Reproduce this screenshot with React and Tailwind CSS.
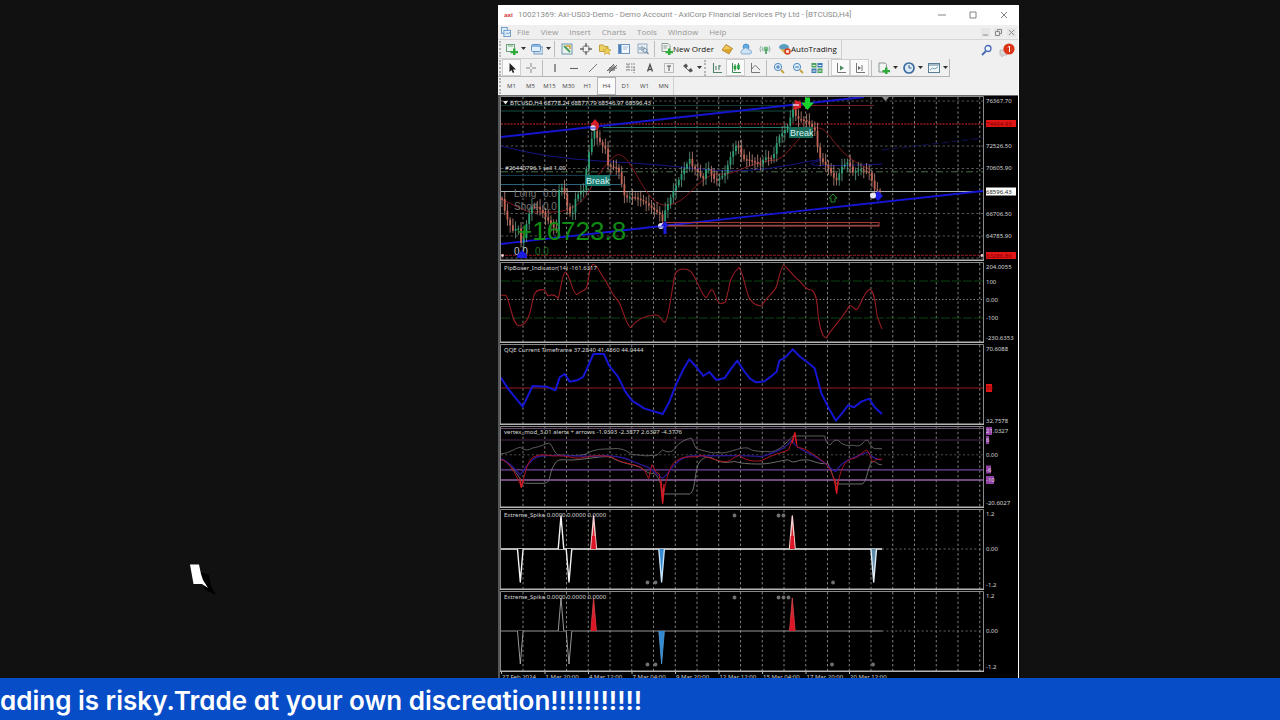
import React from "react";

const GRID_X = Array.from({ length: 22 }, (_, i) => 523 + i * 21.75);
const PLOT_LEFT = 501;
const PLOT_RIGHT = 983;

/* ---------- shared chart pieces ---------- */

function Label({ x = 986, y, fill = "#d4d4d4", children }) {
  return (
    <text x={x} y={y} fill={fill} className="font-['Noto_Sans',sans-serif] text-[6px]">
      {children}
    </text>
  );
}

function Panel({ top, bottom, label, viewBottom = bottom, children }) {
  return (
    <svg
      viewBox={`498 ${top} 520 ${viewBottom - top}`}
      className="block w-full"
      role="img"
      aria-label={label}
    >
      <rect x="498" y={top} width="520" height={viewBottom - top} fill="#000" />
      <g stroke="#8c9089" strokeWidth="0.9" strokeDasharray="2.4 2.4">
        {GRID_X.map((x) => (
          <line key={x} x1={x} x2={x} y1={top + 2} y2={bottom - 1} />
        ))}
      </g>
      {children}
      <rect x="498" y={top} width="2" height={viewBottom - top} fill="#55575a" />
      <path
        d={`M500.5 ${bottom - 1}V${top + 1.5}H983.5V${bottom - 1}`}
        fill="none"
        stroke="#8a8a8a"
      />
      <line x1="500" x2="984" y1={bottom - 0.7} y2={bottom - 0.7} stroke="#b4b4b4" strokeWidth="1.4" />
    </svg>
  );
}

function HLine({ y, stroke, dash, width = 0.9, x1 = PLOT_LEFT, x2 = PLOT_RIGHT }) {
  return <line x1={x1} x2={x2} y1={y} y2={y} stroke={stroke} strokeWidth={width} strokeDasharray={dash} />;
}

/* ---------- price panel ---------- */

const PRICE = [
  [502, 199], [506, 215], [513, 228], [518, 224], [522, 246], [526, 225], [531, 208], [538, 210],
  [545, 219], [551, 225], [557, 230], [559, 188], [563, 184], [568, 207], [572, 214], [576, 195],
  [585, 191], [587, 161], [591, 149], [593, 130], [598, 142], [606, 149], [608, 164], [618, 165],
  [622, 183], [625, 196], [631, 197], [641, 203], [651, 209], [660, 213], [663, 220], [665, 208],
  [673, 189], [681, 175], [690, 161], [692, 169], [698, 175], [703, 181], [707, 166], [715, 178],
  [725, 171], [730, 157], [737, 145], [743, 162], [760, 164], [765, 155], [773, 155], [778, 136],
  [787, 129], [793, 112], [797, 122], [807, 122], [815, 129], [819, 154], [828, 165], [836, 182],
  [842, 169], [848, 165], [853, 175], [860, 169], [870, 170], [874, 186], [882, 190],
];

function priceAt(x) {
  for (let i = 1; i < PRICE.length; i++) {
    const [x0, y0] = PRICE[i - 1];
    const [x1, y1] = PRICE[i];
    if (x <= x1) return y0 + ((y1 - y0) * (x - x0)) / (x1 - x0);
  }
  return 190;
}

const CANDLES = Array.from({ length: 140 }, (_, i) => {
  const x = 502 + i * 2.72;
  const wiggle = (n) => Math.sin(n * 12.9) * 3;
  const open = priceAt(Math.max(502, x - 2.72)) + wiggle(i - 1);
  const close = priceAt(x) + wiggle(i);
  const hi = Math.min(open, close) - 2 - Math.abs(Math.sin(i * 7.3)) * 6;
  const lo = Math.max(open, close) + 2 + Math.abs(Math.cos(i * 5.1)) * 6;
  return { x, open, close, hi, lo };
});

function PricePanel() {
  return (
    <Panel top={95} bottom={261} label="BTCUSD price, four hour candles">
      <rect x="498" y="95" width="520" height="1" fill="#6b6b6b" />
      {[101, 146, 168.5, 213.5, 236, 258].map((y) => (
        <HLine key={y} y={y} stroke="#5d615c" dash="2.4 2.4" />
      ))}
      <HLine y={105.5} stroke="#143f38" x2={793} />
      <HLine y={111} stroke="#195247" x2={793} />
      <HLine y={127.5} stroke="#247465" x1={603} x2={789} width={1.2} />
      <HLine y={131} stroke="#1b5c50" x1={603} x2={789} />
      <HLine y={105.5} stroke="#7b1d22" x1={800} x2={874} />
      <HLine y={124} stroke="#db2a30" dash="2 1.2" width={1.2} />
      <HLine y={171.8} stroke="#527b52" dash="7 3 2 3" />
      <HLine y={175.5} stroke="#173f54" x2={621} />
      <HLine y={184.5} stroke="#2c7189" x2={621} />
      <HLine y={191.5} stroke="#a9b3b7" width={1.1} />
      <HLine y={255.3} stroke="#a61d26" dash="3 1" />

      <g fill="none">
        <path d="M501 146Q545 158 600 161T700 169T790 165T815 162T882 164" stroke="#151585" />
        <path d="M882 150L983 138" stroke="#10105a" strokeDasharray="7 3" />
        <path
          d="M501 199C515 205 525 213 536 212S560 215 575 206S590 185 602 170S617 152 624 157S640 184 650 196S670 207 681 200S705 172 720 174S750 161 777 160C788 154 795 142 803 135S819 124 827 133S845 160 870 169"
          stroke="#8e1820"
          strokeWidth="0.9"
        />
        <path d="M501 137L864 97" stroke="#1515cf" strokeWidth="1.8" />
        <path d="M501 244L662 226L983 191" stroke="#1515d8" strokeWidth="1.8" />
        <rect x="663" y="222.5" width="216" height="3.6" stroke="#a2372f" strokeWidth="1.1" />
        <path d="M663 225.3H879" stroke="#b87479" strokeWidth="0.7" />
      </g>

      {CANDLES.map((c) => {
        const up = c.close < c.open;
        const color = up ? "#2fae7e" : "#d8705e";
        return (
          <g key={c.x} opacity="0.9">
            <line x1={c.x} x2={c.x} y1={c.hi} y2={c.lo} stroke={up ? "#6fb096" : "#d69c8e"} strokeWidth="0.8" />
            <rect
              x={c.x - 0.9}
              y={Math.min(c.open, c.close)}
              width="1.8"
              height={Math.max(1.5, Math.abs(c.close - c.open))}
              fill={color}
            />
          </g>
        );
      })}

      <g className="font-['Liberation_Sans',sans-serif]">
        <text x="517" y="240" fill="#108a12" className="text-[26px]">+16723.8</text>
        <g fill="#747474" className="text-[10px]">
          <text x="514" y="197">Long</text>
          <text x="543" y="197">0.0</text>
          <text x="514" y="210">Short</text>
          <text x="543" y="210">0.0</text>
          <text x="514" y="255" fill="#c4c4c4">0.0</text>
          <text x="535" y="255" fill="#1d701e">0.0</text>
        </g>
        <rect x="585" y="175" width="25" height="11" fill="#197a70" />
        <rect x="789" y="127" width="24" height="11" fill="#1a6a5a" />
        <g fill="#d9f2ef" className="text-[9px]">
          <text x="586" y="184">Break</text>
          <text x="790" y="136">Break</text>
        </g>
      </g>

      <circle cx="595" cy="126" r="4" fill="#d21d2a" />
      <path d="M595 119l4 5h-8z" fill="#d21d2a" />
      <circle cx="593" cy="128" r="2.8" fill="#dcdcf8" />
      <path d="M590 128h6" stroke="#2727d0" strokeWidth="1" />
      <path d="M795 100l6 2v6l-8 2z" fill="#d8222c" />
      <path d="M793 105h6" stroke="#e7d9f0" strokeWidth="1.4" />
      <path d="M805 97.500h5v5h4l-6.500 7.500l-6.500-7.500h4z" fill="#17d42b" />
      <path d="M833 194l4 4h-2v4h-4v-4h-2z" fill="none" stroke="#1d8a27" />
      <circle cx="661" cy="226" r="3" fill="#dcdcf8" />
      <path d="M665 221l4 5h-2.500v8h-3v-8H661z" fill="#1c1ce0" />
      <path d="M658 227h6" stroke="#2727d0" strokeWidth="1" />
      <path d="M872 195l6-4l5 5l-5 5z" fill="#1c1ce0" />
      <circle cx="873" cy="195.500" r="3" fill="#e6e6f4" />
      <path d="M522 250l5 5v3h-10v-3z" fill="#1c1ce0" />
      <path d="M882 97h7l-3.500 4z" fill="#8b8b8b" />
      <circle cx="502.500" cy="255.500" r="1.400" fill="#f0c8c8" />
      <circle cx="982" cy="255.500" r="1.400" fill="#f0c8c8" />

      <path d="M503 101h5l-2.500 3.500z" fill="#e6e6e6" />
      <Label x={510} y={105} fill="#e2e2e2">BTCUSD,H4  68778.24 68877.79 68546.97 68596.43</Label>
      <Label x={505} y={170} fill="#e2e2e2">#26440796.1 sell 1.00</Label>
      <Label y={103}>76367.70</Label>
      <rect x="986" y="120" width="30" height="7" fill="#e01515" />
      <Label y={126} fill="#7c0000">74464.93</Label>
      <Label y={148}>72526.50</Label>
      <Label y={170}>70605.90</Label>
      <rect x="986" y="187.500" width="30" height="8" fill="#fff" />
      <Label y={194} fill="#222">68596.43</Label>
      <Label y={216}>66706.50</Label>
      <Label y={238}>64785.90</Label>
      <rect x="986" y="252" width="30" height="7" fill="#e01515" />
      <Label y={258} fill="#7c0000">63286.80</Label>
    </Panel>
  );
}

/* ---------- oscillator panels ---------- */

function PipBoxerPanel() {
  return (
    <Panel top={261} bottom={343} label="PipBoxer indicator">
      <HLine y={281} stroke="#0c4a12" dash="9 2" />
      <HLine y={299.5} stroke="#8d918b" dash="1.500 2" />
      <HLine y={318} stroke="#0c4a12" dash="9 2" />
      <g transform="translate(498 260) scale(.3333)" fill="none" stroke="#9a1c24" strokeWidth="3.2" strokeLinejoin="round">
        <path d="M8 106H24C36 125 44 195 62 197C84 198 96 170 103 125C108 95 116 88 138 89C146 91 146 112 154 107S172 106 181 115C188 90 193 36 203 36C214 40 224 104 237 104C250 90 256 96 265 85C272 65 274 16 285 13C300 14 308 45 318 55C332 74 342 105 356 117C374 135 380 190 398 203C410 185 430 168 470 165C494 164 490 190 501 186C514 178 524 60 532 42C540 22 566 25 578 34C600 58 606 100 624 113C632 110 635 85 644 90C654 104 656 130 668 131C692 128 682 118 692 88C698 45 712 35 723 22C738 40 744 102 756 118C767 132 780 138 792 137" />
        <path d="M792 137C806 108 830 100 837 75C844 48 850 18 858 16C874 28 886 50 904 62C916 74 922 90 938 89C952 92 957 115 960 160C965 200 971 232 985 234C1001 205 1036 172 1054 137C1065 132 1072 162 1082 142C1094 118 1101 95 1115 88C1132 95 1133 144 1138 170L1152 207" />
      </g>
      <Label x={504} y={270} fill="#d8d8d8">PipBoxer_Indicator(14) -161.6317</Label>
      <Label y={269}>204.0055</Label>
      <Label y={284}>100</Label>
      <Label y={302}>0.00</Label>
      <Label y={320}>-100</Label>
      <Label y={340}>-230.6353</Label>
    </Panel>
  );
}

function QqePanel() {
  return (
    <Panel top={343} bottom={425} label="QQE current timeframe">
      <HLine y={388} stroke="#9a1c22" width={1.1} />
      <g transform="translate(498 260) scale(.3333)" fill="none" stroke="#1515d2" strokeWidth="6" strokeLinejoin="round">
        <path d="M8 352L30 386L74 440L104 378L146 380L172 391L185 352L200 342L215 365L240 360L256 350L272 315L286 282L318 282L334 318L360 350L382 395L402 422L440 446L494 462L512 430L536 370L555 330L574 298L592 318L616 348L634 336L655 360L680 354L700 325L718 302L736 330L756 356L774 367L800 364L818 350L836 335L844 302L862 292L884 268L908 292L932 310L950 325L970 400L990 440L1014 482L1032 460L1050 436L1068 442L1090 425L1114 416L1130 442L1152 462" />
      </g>
      <Label x={504} y={352} fill="#d8d8d8">QQE Current Timeframe 37.2840 41.4860 44.0444</Label>
      <Label y={351}>70.6088</Label>
      <rect x="986" y="384" width="6" height="8" fill="#e01515" />
      <Label y={390} fill="#7c0000">50</Label>
      <Label y={423}>32.7578</Label>
    </Panel>
  );
}

function VortexPanel() {
  return (
    <Panel top={425} bottom={508} label="Vertex alerts and arrows">
      <HLine y={428.5} stroke="#6b4a72" width={1.2} />
      <HLine y={440} stroke="#58285f" />
      <HLine y={454.8} stroke="#565956" dash="2 2.400" />
      <HLine y={469.8} stroke="#7644a0" width={1.2} />
      <HLine y={480} stroke="#9462ab" width={1.3} />
      <g transform="translate(498 424) scale(.3333)" fill="none" strokeWidth="2.600" strokeLinejoin="round">
        <path d="M8 90C40 86 50 72 68 70C80 80 90 80 104 72C130 68 146 56 155 58C168 72 168 90 184 93C220 95 250 96 264 90C280 80 300 74 336 75C372 70 386 80 401 92C430 92 440 98 460 94C480 100 484 84 494 78C515 90 530 80 536 66C552 50 570 44 580 42C592 60 588 75 602 76C632 84 640 88 660 86C690 92 720 68 750 72C770 86 792 80 820 84C856 76 872 44 886 36H980C984 55 988 62 998 62C1008 45 1020 44 1030 58C1050 70 1065 60 1074 66C1098 66 1094 48 1108 48C1118 60 1120 74 1134 74H1152" stroke="#6b6e6b" />
        <path d="M8 106C30 110 50 140 68 166C74 178 80 178 90 178H140C160 176 154 140 168 124C178 102 192 108 210 108C250 110 320 92 340 100C370 120 410 120 430 132C446 142 450 150 466 148C484 156 488 180 496 210H575C592 204 588 158 600 122C612 98 632 94 650 106C670 118 690 116 710 112C730 120 770 120 790 120C830 118 860 106 872 108C888 122 900 106 918 108C940 104 960 124 990 118C1004 144 1008 180 1020 180H1094C1110 164 1108 130 1122 114C1134 108 1136 124 1152 122" stroke="#7c7f7c" />
        <path d="M8 104C40 116 52 138 66 152C82 138 94 100 130 96C190 90 250 100 300 96C370 90 400 112 440 126C464 132 480 158 494 162C516 150 530 100 580 96C650 96 720 92 790 98C850 80 870 66 880 48C900 80 930 80 970 110C990 120 1000 140 1014 142C1032 110 1060 104 1110 84C1120 100 1140 110 1152 106" stroke="#2c1795" strokeWidth="4" />
        <path d="M8 106C34 114 48 140 70 188C80 160 84 118 104 100C130 88 140 94 170 96C210 92 225 108 260 100C290 92 320 96 340 98C370 120 410 118 432 132C440 138 446 150 452 164L462 122L474 144L484 150L494 236C504 150 520 116 540 108C560 92 592 104 610 94C640 104 650 106 670 112C700 118 705 96 725 94C740 108 764 114 790 110L820 96L872 78L890 28L898 70C930 74 940 90 960 100C980 118 1002 120 1016 206C1026 130 1040 114 1060 104C1080 104 1088 86 1106 78C1120 90 1120 130 1134 106L1152 106" stroke="#ad1420" strokeWidth="3" />
        <path d="M66 164L70 190L76 168M489 170L494 238L498 180M882 58L891 26L896 60M1010 164L1016 208L1020 170" stroke="#d81b25" strokeWidth="4" />
      </g>
      <Label x={504} y={434} fill="#d8d8d8">vertex_mod_3.01 alerts + arrows -1.9393 -2.3877 2.6397 -4.3776</Label>
      <rect x="986" y="427" width="6" height="8" fill="#9340a5" />
      <Label y={433}>21.0327</Label>
      <rect x="986" y="436" width="3" height="8" fill="#9340a5" />
      <Label y={442}>6</Label>
      <Label y={457}>0.00</Label>
      <rect x="986" y="465.500" width="5" height="8" fill="#9340a5" />
      <Label y={472}>-6</Label>
      <rect x="986" y="476" width="8" height="8" fill="#9340a5" />
      <Label y={482}>-10</Label>
      <Label y={505}>-20.6027</Label>
    </Panel>
  );
}

function Spike({ x, base, dir, fill = "none", stroke, width }) {
  return (
    <path
      d={`M${x - 2.8} ${base}L${x} ${base + dir * 33}L${x + 2.8} ${base}`}
      fill={fill}
      stroke={stroke}
      strokeWidth={width}
      strokeLinejoin="round"
    />
  );
}

function SpikePanel({ top, bottom, viewBottom, bold, dots, children }) {
  const base = top + 41;
  const width = bold ? 1.4 : 0.8;
  const line = bold ? "#f4f4f4" : "#bdbdbd";
  return (
    <Panel top={top} bottom={bottom} viewBottom={viewBottom} label="Extreme spike">
      <HLine y={base} stroke="#6d706d" dash="2 2.400" x1={882} />
      <HLine y={base} stroke={line} x2={882} width={width} />
      <Spike x={520.3} base={base} dir={1} fill="#000" stroke={line} width={width} />
      <Spike x={561} base={base} dir={-1} fill="#000" stroke={line} width={width} />
      <Spike x={569} base={base} dir={1} fill="#000" stroke={line} width={width} />
      {[593.6, 792.3].map((x) => (
        <g key={x}>
          <Spike x={x} base={base} dir={-1} fill="#d8202a" stroke={bold ? "#f3cfd0" : "#d8464c"} width={width} />
          <path d={`M${x - 2.4} ${base}l.8-13h3.200l.8 13z`} fill="#dc1626" />
        </g>
      ))}
      <Spike x={661.6} base={base} dir={1} fill="#3489d0" stroke={bold ? "#c5e2f6" : "#4f9edc"} width={width} />
      {bold && <Spike x={873.7} base={base} dir={1} fill="#5c8aa8" stroke="#e2eef5" width={width} />}
      {dots.map(([x, side]) => (
        <circle key={x} cx={x} cy={base + side * 33.5} r="1.900" fill="#6f716f" />
      ))}
      <Label x={504} y={top + 9} fill="#d8d8d8">Extreme_Spike 0.0000 0.0000 0.0000</Label>
      <Label y={top + 8}>1.2</Label>
      <Label y={base + 2}>0.00</Label>
      <Label y={bottom - 3}>-1.2</Label>
      {children}
    </Panel>
  );
}

const TIMES = [
  "27 Feb 2024", "1 Mar 20:00", "4 Mar 12:00", "7 Mar 04:00", "9 Mar 20:00",
  "12 Mar 12:00", "15 Mar 04:00", "17 Mar 20:00", "20 Mar 12:00",
];

/* ---------- toolbar icons, all on a 12 by 12 box ---------- */

const PLUS = <path d="M7 5.500h2.500V8H12v2.200H9.500V12.500H7v-2.300H4.500V8H7z" fill="#2fab3c" />;

const ICONS = {
  newChart: <><rect x=".5" y="1.500" width="8" height="7" fill="#eef7ef" stroke="#6d9f78" /><path d="M2 3h5" stroke="#6aa878" />{PLUS}</>,
  profiles: <><rect x="3" y="4" width="9" height="7" fill="#cfe0f2" stroke="#7e9cbc" /><rect x=".5" y="1.500" width="9" height="7" rx="1" fill="#e2effb" stroke="#6494c5" /><path d="M1 3h8" stroke="#6ba4db" strokeWidth="1.500" /></>,
  market: <><rect x="1" y="1" width="10" height="10" fill="#e9f3ec" stroke="#6c95ad" /><path d="M3 3l6 6" stroke="#4a9a5d" strokeWidth="1.800" /><path d="M5 3h4v3" stroke="#d1a12e" strokeWidth="1.500" fill="none" /></>,
  target: <><circle cx="6" cy="6" r="3.500" fill="none" stroke="#737373" /><path d="M6 0v4M6 8v4M0 6h4M8 6h4" stroke="#6a6a6a" strokeWidth="1.400" /></>,
  folder: <><path d="M.5 2h4l1 1.500H9v5H.5z" fill="#edd263" stroke="#c4a23a" /><path d="M8 4l1.200 2.500 2.800.3-2 2 .5 2.700L8 10l-2.500 1.500.5-2.700-2-2 2.800-.3z" fill="#f0d153" stroke="#bd982c" strokeWidth=".6" /></>,
  terminal: <><rect x=".5" y="1.500" width="11" height="9" fill="#f3f8fd" stroke="#6d94bf" /><path d="M1 2h2.500v8H1z" fill="#4b7fba" /><path d="M5 4h5M5 6h4" stroke="#a6bdd6" /></>,
  tester: <><rect x="1" y="1" width="9" height="9" fill="#eaf0f6" stroke="#94a8bd" /><path d="M3 7V4M5 8V3M7 7V4" stroke="#62829f" /><circle cx="8" cy="7.500" r="2" fill="#dce7f0" stroke="#7690a8" /><path d="M9.500 9l2 2" stroke="#7690a8" strokeWidth="1.300" /></>,
  order: <><path d="M1 .5h6l2 2v6H1z" fill="#eef2ef" stroke="#8f9c92" /><path d="M2.500 3h4M2.500 5h3" stroke="#8c9c8f" />{PLUS}</>,
  gold: <><path d="M1 7l4-5.500 6.500 4L8 11z" fill="#dca52f" stroke="#a8781a" strokeWidth=".7" /><path d="M2 6.500L5 2.500l5.500 3" fill="#f2cd63" /></>,
  cloud: <><circle cx="6" cy="4" r="3" fill="#5fabe4" stroke="#3e82bf" strokeWidth=".7" /><path d="M2 11a2.200 2.200 0 0 1 .5-4A3.500 3.500 0 0 1 9 7a2 2 0 0 1 1 4z" fill="#cfe3f4" stroke="#5f94c4" strokeWidth=".7" /></>,
  signal: <><path d="M2 9a5 5 0 0 1 0-6M4 8a3 3 0 0 1 0-4M10 9a5 5 0 0 0 0-6" fill="none" stroke="#8fb3a6" /><circle cx="7" cy="6" r="2.500" fill="#6fbd84" /><path d="M7 6v5" stroke="#5da573" strokeWidth="2" /></>,
  auto: <><ellipse cx="5" cy="4" rx="5" ry="3" fill="#5a9ec2" /><path d="M1 6l5 5 3-4z" fill="#d9ac46" /><circle cx="8.500" cy="8.500" r="3.200" fill="#d6421f" /><rect x="7.200" y="7.200" width="2.600" height="2.600" fill="#fff" /></>,
  search: <><circle cx="7" cy="4.500" r="3" fill="#eaf2ff" stroke="#4669b4" strokeWidth="1.300" /><path d="M5 7l-4 4" stroke="#4669b4" strokeWidth="1.800" /></>,
  cursor: <path d="M3.500 1v9l2-2 1.300 3 1.500-.7L7 7.500h3z" fill="#222" />,
  cross: <path d="M6 1v4M6 7v4M1 6h4M7 6h4" stroke="#858585" />,
  vline: <path d="M6 2v8" stroke="#555" strokeWidth="1.200" />,
  hline: <path d="M2 6.500h8" stroke="#666" strokeWidth="1.100" />,
  trend: <path d="M2 10l8-8" stroke="#777" />,
  channel: <path d="M1 9l7-7M3 11l8-8M4 5v5M6 4v5M8 3v5M2 8h7M4 6h7" stroke="#666" />,
  fib: <path d="M1 2h10M1 5h10M1 8h10M3 2v6M9 5v6" stroke="#777" strokeDasharray="1.500 1" />,
  textA: <path d="M3.500 9.500L6 2.500l2.500 7M4.500 7.500h3" fill="none" stroke="#4f4f4f" strokeWidth="1.300" />,
  textBox: <><rect x="1.500" y="1.500" width="9" height="9" fill="none" stroke="#888" strokeDasharray="1 1" /><path d="M4 4h4M6 4v5" stroke="#555" /></>,
  arrows: <><path d="M1 4l3-2.500L6 4 4 6.500z" fill="#555" /><path d="M6 8l3-2 2 3-3 1.500z" fill="#555" /><path d="M4 6l3 3" stroke="#666" /></>,
  bars: <path d="M2.500 1v9.500H11M5 4v4M8 3v5M8 4h2" stroke="#52836a" strokeWidth="1.100" fill="none" />,
  candles: <><path d="M2.500 1v9.500H11M5 2v7M8.500 1v7" stroke="#3c8a55" fill="none" /><path d="M4 4h2v3H4zM7.500 3h2v4h-2z" fill="#25a245" stroke="#25a245" strokeWidth=".6" /></>,
  lineChart: <path d="M2.500 1v9.500H11M3 7c2-4 4-4 5-2l3 3" stroke="#777" fill="none" />,
  zoomIn: <><circle cx="5" cy="5" r="3.600" fill="#dcedfb" stroke="#4d88bd" /><path d="M3 5h4M5 3v4" stroke="#3c79b2" /><path d="M8 8l3 3" stroke="#c0a23c" strokeWidth="1.800" /></>,
  zoomOut: <><circle cx="5" cy="5" r="3.600" fill="#dcedfb" stroke="#4d88bd" /><path d="M3 5h4" stroke="#3c79b2" /><path d="M8 8l3 3" stroke="#c0a23c" strokeWidth="1.800" /></>,
  tiles: <><path d="M.5 1h5v4.500h-5zM6.500 6.500h5V11h-5z" fill="#4ba05a" /><path d="M6.500 1h5v4.500h-5zM.5 6.500h5V11h-5z" fill="#3f7ab8" /><path d="M1.500 3.500h3M7.500 3.500h3M1.500 9h3M7.500 9h3" stroke="#e7f3ea" strokeWidth="1.200" /></>,
  scroll: <><path d="M2.500 1v9.500H11" stroke="#777" fill="none" /><path d="M5 3.500v5L9 6z" fill="#4d8a62" /></>,
  shift: <><path d="M2.500 1v9.500H11M8 3v6" stroke="#777" fill="none" /><path d="M4 4v4l3-2z" fill="#666" /></>,
  indicators: <><path d="M1 1h6l1.500 1.500V10H1z" fill="#f1f4f1" stroke="#8a958c" />{PLUS}</>,
  clock: <><circle cx="6" cy="6" r="5" fill="#dcebf8" stroke="#3b6b9e" strokeWidth="1.700" /><path d="M6 3v3h2.500" stroke="#3b5d85" fill="none" /></>,
  template: <><rect x=".5" y="1.500" width="11" height="9" fill="#f2f8f9" stroke="#567f96" /><path d="M1 3h10" stroke="#567f96" /><path d="M2 8l2.500-2 2 1L10 5" stroke="#6c9dac" fill="none" /></>,
};

function Icon({ name }) {
  return (
    <svg viewBox="0 0 12 12" className="size-3 shrink-0" fill="none" aria-hidden="true">
      {ICONS[name]}
    </svg>
  );
}

function Tool({ name, label, caret, active, children }) {
  const size = children ? "px-1" : caret ? "w-[25px] pl-1" : "w-[19px] justify-center";
  return (
    <button
      type="button"
      aria-label={label}
      className={`flex h-full shrink-0 items-center ${size} ${active ? "border border-[#cfcfcf] bg-[#fafafa]" : ""}`}
    >
      <Icon name={name} />
      {children && <span className="whitespace-nowrap text-[8px] text-[#111]">{children}</span>}
      {caret && (
        <svg viewBox="0 0 5 4" className="ml-[3px] w-[5px]" aria-hidden="true"><path d="M0 0h5L2.500 3z" fill="#333" /></svg>
      )}
    </button>
  );
}

const Sep = () => <span className="mx-0.5 h-4 w-px shrink-0 bg-[#bdbdbd]" />;
const Grip = () => <span className="mx-px h-4 w-0.5 shrink-0 border-l-2 border-dotted border-[#b5b5b5]" />;

const MENUS = ["File", "View", "Insert", "Charts", "Tools", "Window", "Help"];
const FRAMES = ["M1", "M5", "M15", "M30", "H1", "H4", "D1", "W1", "MN"];

function TitleBar() {
  return (
    <header className="flex h-5 items-center bg-white pl-1.5 pr-2 text-[8px] text-[#8d8d8d]">
      <span className="w-3.5 text-[6px] font-bold text-[#d33a3f]">axi</span>
      <h1 className="whitespace-nowrap font-['Roboto',sans-serif]">
        10021369: Axi-US03-Demo - Demo Account - AxiCorp Financial Services Pty Ltd - [BTCUSD,H4]
      </h1>
      <div className="ml-auto flex gap-[19px]">
        {[["Minimize", "M2 6h8"], ["Maximize", "M3 3h6v6H3z"], ["Close", "M3 3l6 6M9 3l-6 6"]].map(([label, d]) => (
          <button key={label} type="button" aria-label={label}>
            <svg viewBox="0 0 12 12" className="size-3" fill="none" stroke="#777" strokeWidth=".9"><path d={d} /></svg>
          </button>
        ))}
      </div>
    </header>
  );
}

function MenuBar() {
  return (
    <nav className="flex h-[15px] items-center border-b border-[#d6d6d6] bg-[#efefef] pl-[3px] text-[8px] text-[#979797]">
      <svg viewBox="0 0 12 12" className="mr-1.5 size-2.5" fill="#e3effa" stroke="#5b8fc4" aria-hidden="true">
        <rect x=".5" y=".5" width="7" height="7" /><rect x="3.500" y="4" width="8" height="7.500" /><path d="M5 9l2-2 2 1 2-2" fill="none" />
      </svg>
      <div className="flex gap-[11px]">
        {MENUS.map((m) => <button key={m} type="button">{m}</button>)}
      </div>
      <div className="ml-auto flex gap-1 pr-0.5">
        {[["Minimize chart", "M2 7h5"], ["Restore chart", "M1.500 3.500h4v4h-4zM3.500 3V1.500h4v4H6"], ["Close chart", "M2 2l5 5M7 2L2 7"]].map(([label, d]) => (
          <button key={label} type="button" aria-label={label} className="bg-[#e6e6e6]">
            <svg viewBox="0 0 9 9" className="size-[9px]" fill="none" stroke="#8a8a8a"><path d={d} /></svg>
          </button>
        ))}
      </div>
    </nav>
  );
}

function Toolbars() {
  return (
    <div className="bg-[#f0f0f0]">
      <div className="flex h-[19px] items-center">
        <div className="flex h-full items-center border-b border-r border-[#d0d0d0]">
          <Grip />
          <Tool name="newChart" label="New chart" caret />
          <Tool name="profiles" label="Profiles" caret />
          <Sep />
          <Tool name="market" label="Market watch" />
          <Tool name="target" label="Data window" />
          <Tool name="folder" label="Navigator" />
          <Tool name="terminal" label="Terminal" />
          <Tool name="tester" label="Strategy tester" />
          <Sep />
          <Tool name="order" label="New Order">New Order</Tool>
          <Tool name="gold" label="MetaEditor" />
          <Tool name="cloud" label="Cloud" />
          <Tool name="signal" label="Signals" />
          <Tool name="auto" label="AutoTrading">AutoTrading</Tool>
        </div>
        <div className="ml-auto flex items-center gap-1.5 pr-[3px]">
          <button type="button" aria-label="Search" className="flex"><Icon name="search" /></button>
          <button type="button" aria-label="1 notification" className="flex">
            <svg viewBox="0 0 16 14" className="h-3.5 w-4"><path d="M1 7h7v5H5l-2 2v-2H1z" fill="#dadada" stroke="#aaa" strokeWidth=".6" /><circle cx="10" cy="6" r="5.600" fill="#dc3419" /><path d="M9 4.500L10.500 3v6" stroke="#fff" fill="none" /></svg>
          </button>
        </div>
      </div>
      <div className="flex h-[18px]">
        <div className="flex items-center border-b border-r border-[#b5b5b5]">
          <Grip />
          <Tool name="cursor" label="Cursor" active />
          <Tool name="cross" label="Crosshair" />
          <Sep />
          <Tool name="vline" label="Vertical line" />
          <Tool name="hline" label="Horizontal line" />
          <Tool name="trend" label="Trendline" />
          <Tool name="channel" label="Channel" />
          <Tool name="fib" label="Fibonacci" />
          <Tool name="textA" label="Text" />
          <Tool name="textBox" label="Text label" />
          <Tool name="arrows" label="Arrows" caret />
          <Grip />
          <Tool name="bars" label="Bar chart" />
          <Tool name="candles" label="Candlesticks" active />
          <Tool name="lineChart" label="Line chart" />
          <Sep />
          <Tool name="zoomIn" label="Zoom in" />
          <Tool name="zoomOut" label="Zoom out" />
          <Tool name="tiles" label="Tile windows" />
          <Sep />
          <Tool name="scroll" label="Auto scroll" active />
          <Tool name="shift" label="Chart shift" active />
          <Sep />
          <Tool name="indicators" label="Indicators" caret />
          <Tool name="clock" label="Periods" caret />
          <Tool name="template" label="Templates" caret />
        </div>
      </div>
      <div className="flex h-[18px]">
        <div className="flex items-center border-r border-[#d0d0d0] text-[6px] text-[#444]">
          <Grip />
          {FRAMES.map((f) => (
            <button
              key={f}
              type="button"
              className={`h-full w-[19px] ${f === "H4" ? "border border-[#b5b5b5] bg-[#fafafa]" : ""}`}
            >
              {f}
            </button>
          ))}
        </div>
      </div>
    </div>
  );
}

export default function App() {
  return (
    <div className="relative flex h-screen flex-col overflow-hidden bg-[#111] font-['Open_Sans',sans-serif]">
      <main className="grid min-h-0 flex-1 grid-cols-[498fr_521fr_261fr] overflow-hidden pt-[5px]">
        <section className="col-start-2 min-w-0 border-r border-white">
          <TitleBar />
          <MenuBar />
          <Toolbars />
          <PricePanel />
          <PipBoxerPanel />
          <QqePanel />
          <VortexPanel />
          <SpikePanel
            top={508}
            bottom={590}
            bold
            dots={[[647.5, 1], [655.5, 1], [734.5, -1], [778.5, -1], [783.5, -1], [833, 1]]}
          />
          <SpikePanel
            top={590}
            bottom={672}
            viewBottom={685}
            dots={[[647.5, 1], [655.5, 1], [734.5, -1], [778.5, -1], [783.5, -1], [788.5, -1], [832, 1], [873, 1]]}
          >
            {TIMES.map((t, i) => (
              <g key={t}>
                <line x1={501.5 + i * 43.5} x2={501.5 + i * 43.5} y1="672" y2="674" stroke="#bbb" />
                <Label x={502 + i * 43.5} y={679}>{t}</Label>
              </g>
            ))}
          </SpikePanel>
        </section>
      </main>
      <svg viewBox="0 0 60 60" className="absolute bottom-[110px] left-[170px] size-[60px]" aria-hidden="true">
        <path d="M30 22l9 3 2 11 5 9-11-5z" fill="#000" />
        <path d="M20 14.500h9l2 9.500 2 6 5 8-6-4h-8.500z" fill="#fff" />
      </svg>
      <footer className="flex h-[42px] shrink-0 items-center overflow-hidden bg-[#084dc8] pt-0.5">
        <p className="whitespace-nowrap font-['Inter',sans-serif] text-[26px] font-semibold text-white [font-feature-settings:'cv11']">
          ading is risky.Trade at your own discreation!!!!!!!!!!!
        </p>
      </footer>
    </div>
  );
}
